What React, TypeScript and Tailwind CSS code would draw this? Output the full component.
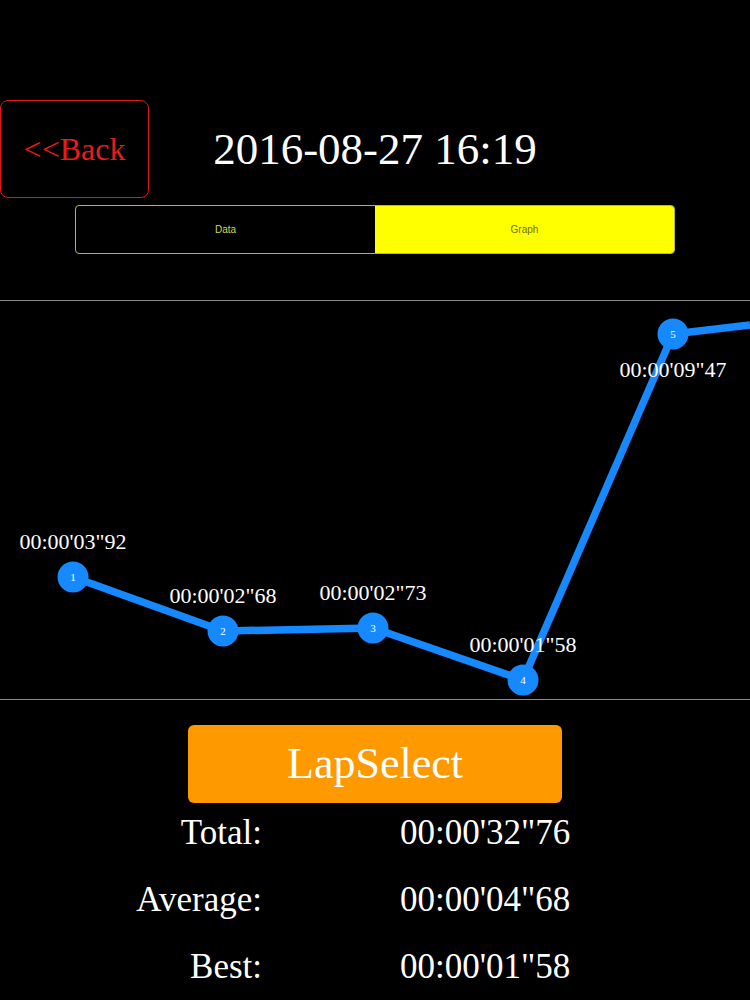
import React from "react";

const serif = { fontFamily: '"Liberation Serif", "DejaVu Serif", serif' };

const laps = [
  { n: 1, x: 73, y: 276, label: "00:00'03\"92", above: true },
  { n: 2, x: 223, y: 330, label: "00:00'02\"68", above: true },
  { n: 3, x: 373, y: 327, label: "00:00'02\"73", above: true },
  { n: 4, x: 523, y: 379, label: "00:00'01\"58", above: true },
  { n: 5, x: 673, y: 33, label: "00:00'09\"47", above: false },
];

const stats = [
  { label: "Total:", value: "00:00'32\"76" },
  { label: "Average:", value: "00:00'04\"68" },
  { label: "Best:", value: "00:00'01\"58" },
];

function LapChart() {
  const pts = laps.map((p) => `${p.x},${p.y}`).join(" ") + " 750,24";
  return (
    <svg width="750" height="398" viewBox="0 0 750 398" className="block">
      <polyline points={pts} fill="none" stroke="#1689ff" strokeWidth="7.5" strokeLinejoin="round" />
      {laps.map((p) => (
        <g key={p.n}>
          <circle cx={p.x} cy={p.y} r="15.5" fill="#1689ff" />
          <text
            x={p.x}
            y={p.y + 4}
            textAnchor="middle"
            fill="#fff"
            fontSize="11"
            fontFamily='"Liberation Serif", serif'
          >
            {p.n}
          </text>
          <text
            x={p.x}
            y={p.above ? p.y - 28 : p.y + 43}
            textAnchor="middle"
            fill="#fff"
            fontSize="22"
            fontFamily='"Liberation Serif", serif'
          >
            {p.label}
          </text>
        </g>
      ))}
    </svg>
  );
}

export default function App() {
  return (
    <div className="h-[1000px] w-[750px] overflow-hidden bg-black text-white" style={serif}>
      <div className="pt-[100px]">
        <div className="grid grid-cols-[150px_1fr_150px] items-center">
          <button className="flex h-[98px] w-[149px] items-center justify-center rounded-lg border border-[#e0141a] text-[32px] text-[#e81c1c]">
            &lt;&lt;Back
          </button>
          <div className="text-center text-[45px] leading-none">2016-08-27 16:19</div>
          <div />
        </div>

        <div
          className="mx-[75px] mt-[7px] grid h-[49px] grid-cols-2 overflow-hidden rounded-[4px] border border-[#b8b83c] text-[10px]"
          style={{ fontFamily: '"Liberation Sans", Arial, sans-serif' }}
        >
          <div className="flex items-center justify-center text-[#d6d64a]">Data</div>
          <div className="flex items-center justify-center bg-[#ffff00] text-[#6e6e10]">Graph</div>
        </div>
      </div>

      <div className="mt-[46px] border-y border-[#8c8c8c]">
        <LapChart />
      </div>

      <div className="flex justify-center pt-[25px]">
        <button className="flex h-[78px] w-[374px] items-center justify-center rounded-md bg-[#fe9a00] text-[44px] text-white">
          LapSelect
        </button>
      </div>

      <div className="mt-[-4px] flex flex-col">
        {stats.map((s) => (
          <div key={s.label} className="grid h-[67px] grid-cols-[262px_1fr] items-center text-[35px] leading-none">
            <div className="text-right">{s.label}</div>
            <div className="pl-[138px]">{s.value}</div>
          </div>
        ))}
      </div>
    </div>
  );
}
